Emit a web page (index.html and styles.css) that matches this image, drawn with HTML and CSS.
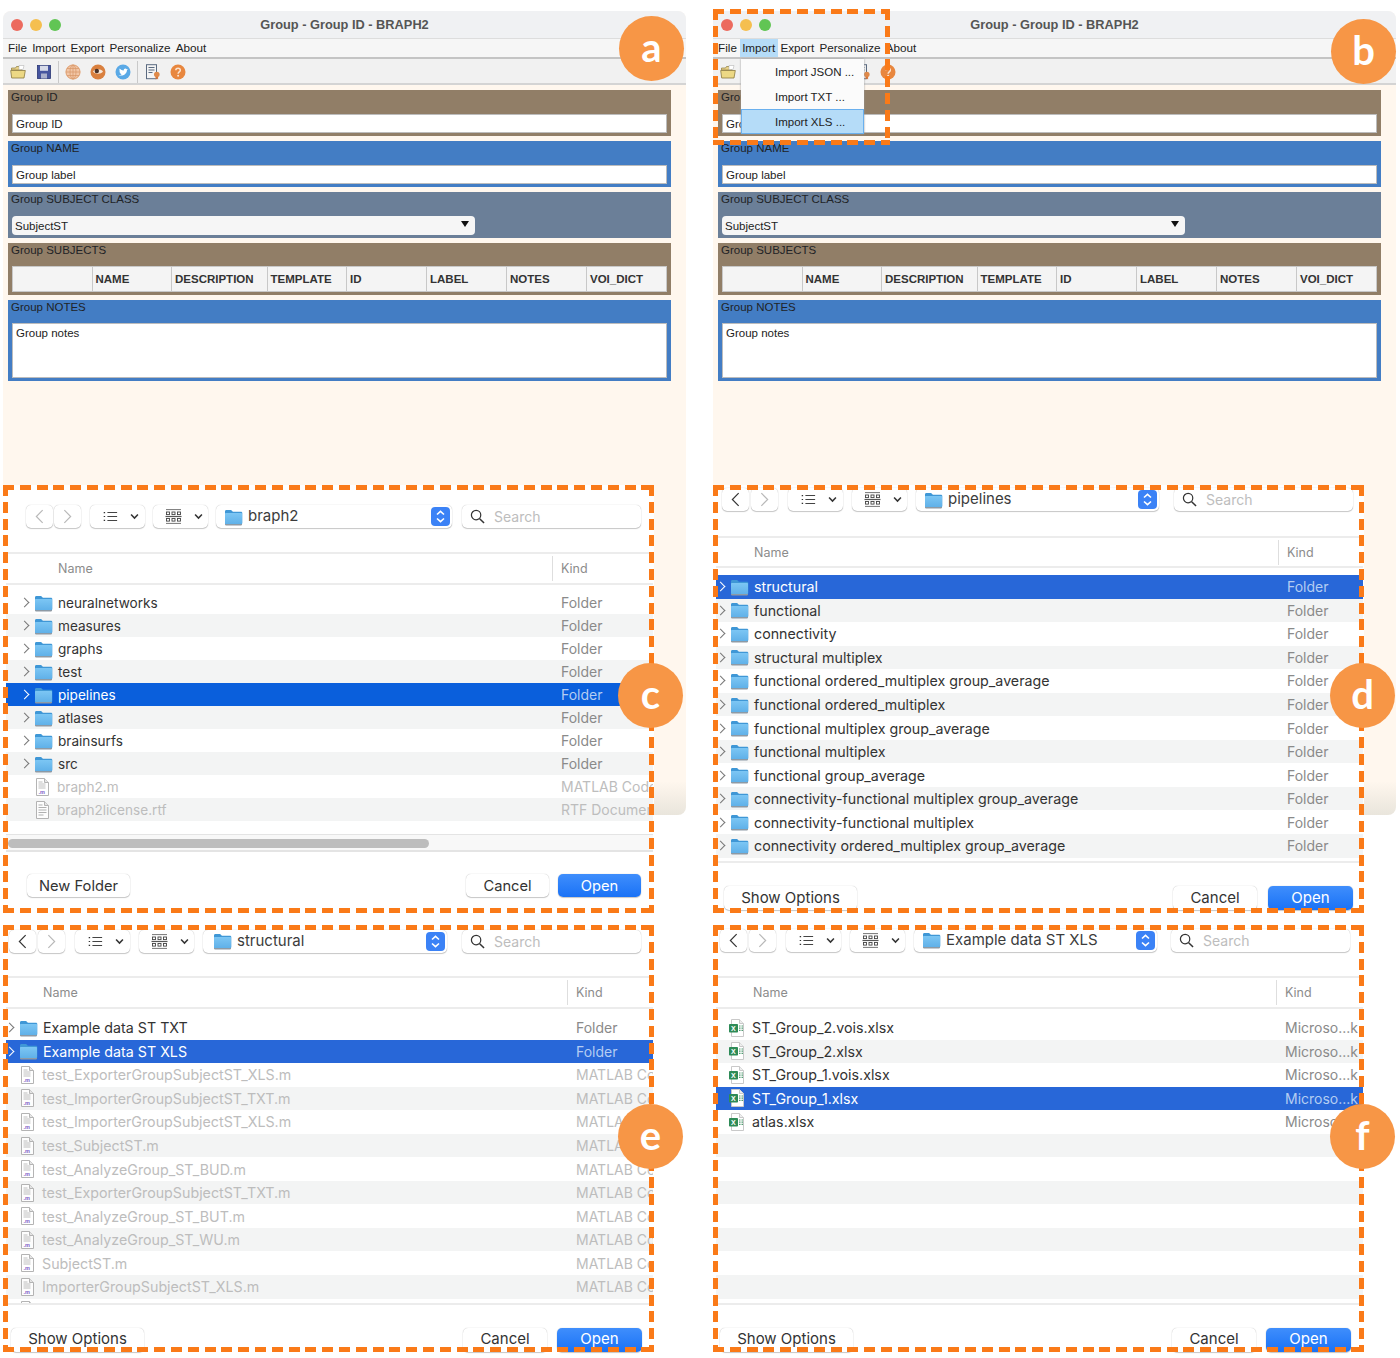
FILE: index.html

```html
<!DOCTYPE html>
<html lang="en">
<head>
  <meta charset="UTF-8">
  <title>Group - Group ID - BRAPH2</title>
  <link rel="stylesheet" href="styles.css">
</head>
<body>
<svg class="defs" width="0" height="0">
  <defs>
    <linearGradient id="fold" x1="0" y1="0" x2="0" y2="1"><stop offset="0" stop-color="#7cc6f4"/><stop offset="1" stop-color="#5fb0e8"/></linearGradient>
    <symbol id="folder" viewBox="0 0 19 18">
      <path d="M1 3.5C1 2.5 1.6 2 2.5 2h4.6l1.8 1.8h8c.9 0 1.4.6 1.4 1.4v9.6c0 1-.6 1.6-1.5 1.6h-14C1.6 16.4 1 15.8 1 14.8z" fill="#3f97d6"/>
      <path d="M1 6c0-.6.4-1 1-1h15c.6 0 1 .4 1 1v8.8c0 1-.6 1.6-1.5 1.6h-14C1.6 16.4 1 15.8 1 14.8z" fill="url(#fold)"/>
      <path d="M1 16h17v.6c0 .5-.4.9-1 .9H2c-.6 0-1-.4-1-.9z" fill="#8d9aa5"/>
    </symbol>
    <symbol id="mfile" viewBox="0 0 19 18">
      <path d="M3.5 .5h8l4 4v13h-12z" fill="#fff" stroke="#a8a8a8"/>
      <path d="M11.500 .5v4h4" fill="#e2e2e2" stroke="#a8a8a8"/>
      <path d="M5.500 4h4M5.500 6h7M5.500 8h7M5.500 10h7" stroke="#b5b5b5"/>
      <text x="5.500" y="16" class="m-ext">.m</text>
    </symbol>
    <symbol id="rtf" viewBox="0 0 19 18">
      <path d="M3.500 .5h8l4 4v13h-12z" fill="#fff" stroke="#a8a8a8"/>
      <path d="M11.500 .5v4h4" fill="#e2e2e2" stroke="#a8a8a8"/>
      <path d="M5.500 4h4M5.500 6.500h8M5.500 9h8M5.500 11.500h8M5.500 14h5" stroke="#a5a5a5"/>
    </symbol>
    <symbol id="xls" viewBox="0 0 19 18">
      <path d="M3.500 .5h8l4 4v13h-12z" fill="#fff" stroke="#c9c9c9"/>
      <path d="M11.500 .5v4h4" fill="#eee" stroke="#c9c9c9"/>
      <rect x="1" y="5" width="9" height="8.500" rx=".8" fill="#2e8b57"/>
      <text x="3" y="12" class="x-ext">X</text>
      <path d="M11 7h1.500M13.500 7H15M11 9.200h1.500M13.500 9.200H15M11 11.400h1.500M13.500 11.400H15" stroke="#4f9a70" stroke-width="1.200"/>
    </symbol>
    <symbol id="listview" viewBox="0 0 17 12">
      <path d="M5 1.500h11M5 6h11M5 10.500h11" stroke="#444" stroke-width="1.200"/>
      <path d="M.8 1.500h1.600M.8 6h1.600M.8 10.500h1.600" stroke="#333" stroke-width="1.400"/>
    </symbol>
    <symbol id="gridview" viewBox="0 0 17 15">
      <path d="M1 .6h15M1 14.400h15" stroke="#777"/>
      <path d="M.5 7.500h16" stroke="#555" stroke-width="1.200"/>
      <g fill="none" stroke="#444" stroke-width=".9"><rect x="1.500" y="3" width="3" height="2.600"/><rect x="7" y="3" width="3" height="2.600"/><rect x="12.500" y="3" width="3" height="2.600"/><rect x="1.500" y="9.500" width="3" height="2.600"/><rect x="7" y="9.500" width="3" height="2.600"/><rect x="12.500" y="9.500" width="3" height="2.600"/></g>
    </symbol>
    <symbol id="chevdown" viewBox="0 0 10 7"><path d="M1.200 1.300 5 5.200l3.800-3.900" fill="none" stroke="#333" stroke-width="1.700"/></symbol>
    <symbol id="back" viewBox="0 0 10 16"><path d="M8.500 1 1.500 8l7 7" fill="none" stroke="currentColor" stroke-width="1.300"/></symbol>
    <symbol id="fwd" viewBox="0 0 10 16"><path d="M1.500 1l7 7-7 7" fill="none" stroke="currentColor" stroke-width="1.300"/></symbol>
    <symbol id="stepper" viewBox="0 0 19 19">
      <rect width="19" height="19" rx="4" fill="#3b82f6"/>
      <path d="M6 7.500l3.500-3.200L13 7.500M6 11.500l3.500 3.200 3.500-3.200" fill="none" stroke="#fff" stroke-width="1.600"/>
    </symbol>
    <symbol id="lens" viewBox="0 0 16 16"><circle cx="6.500" cy="6.500" r="5" fill="none" stroke="#333" stroke-width="1.300"/><path d="M10.300 10.300l4.700 4.700" stroke="#333" stroke-width="1.600"/></symbol>
    <symbol id="t-open" viewBox="0 0 16 16">
      <path d="M1.500 4h4l1-1.500h5V6h-10z" fill="#e8d28a" stroke="#8b7a3e" stroke-width=".7"/>
      <path d="M9 1.500l5 0-1 4H9z" fill="#fff" stroke="#aaa" stroke-width=".5"/>
      <path d="M.7 6.500h14.600l-1.300 7.500H1.700z" fill="#ecd884" stroke="#8b7a3e" stroke-width=".8"/>
    </symbol>
    <symbol id="t-save" viewBox="0 0 16 16">
      <rect x="1.500" y="1.500" width="13" height="13" fill="#46559f" stroke="#2a3674" stroke-width=".8"/>
      <rect x="4" y="1.800" width="8" height="5" fill="#d7dbe9"/>
      <rect x="5" y="9.500" width="6" height="5" fill="#aab0cc"/>
    </symbol>
    <symbol id="t-globe" viewBox="0 0 16 16">
      <circle cx="8" cy="8" r="7.500" fill="#f2c6a6"/>
      <g fill="none" stroke="#d99a6c" stroke-width=".8"><circle cx="8" cy="8" r="7"/><ellipse cx="8" cy="8" rx="3" ry="7"/><path d="M1 8h14M2 4.500h12M2 11.500h12M8 1v14"/></g>
    </symbol>
    <symbol id="t-eye" viewBox="0 0 16 16">
      <circle cx="8" cy="8" r="7.500" fill="#d9803f"/>
      <path d="M3 7.500C5 4.500 11 4.500 13 7.500 11 10.500 5 10.500 3 7.500z" fill="#f6e6d8"/>
      <circle cx="6.800" cy="7" r="2.200" fill="#4a3228"/>
    </symbol>
    <symbol id="t-bird" viewBox="0 0 16 16">
      <circle cx="8" cy="8" r="7.500" fill="#5aa9e6"/>
      <path d="M3.500 11c3.500 1.500 8.200-.2 8.500-5l1-1-1.300.2c-.8-1.300-3.200-.8-3 1.300-1.700 0-3-.8-4-2-.6 1.200-.2 2.300.6 3l-.9-.2c0 1 .7 1.800 1.600 2l-.8.100c.3.700 1 1.100 1.700 1.100-.9.600-2 .7-3.400.5z" fill="#fff"/>
    </symbol>
    <symbol id="t-cert" viewBox="0 0 16 16">
      <rect x="1.500" y=".7" width="10" height="14" fill="#f4f4f4" stroke="#5a6a80"/>
      <path d="M3.500 3.500h6M3.500 6h6M3.500 8.500h4" stroke="#5a6a80"/>
      <circle cx="11.800" cy="10.500" r="2.800" fill="#e08a4a"/>
      <path d="M10.500 12.800v2.700l1.300-1 1.300 1v-2.700" fill="#d9773a"/>
    </symbol>
    <symbol id="t-help" viewBox="0 0 16 16">
      <circle cx="8" cy="8" r="7.500" fill="#e8873f"/>
      <path d="M5.800 6.200C5.800 3.600 10.300 3.600 10.300 6.200c0 1.700-2.200 1.700-2.200 3.500" fill="none" stroke="#fbe3cf" stroke-width="1.500"/>
      <circle cx="8.100" cy="11.800" r="1" fill="#fbe3cf"/>
    </symbol>
  </defs>
</svg>

<!-- (a) main window -->
<section class="window win-a">
  <header class="titlebar"><span class="lights"><i class="red"></i><i class="yellow"></i><i class="green"></i></span>Group - Group ID - BRAPH2</header>
  <nav class="menubar"><span>File</span><span>Import</span><span>Export</span><span>Personalize</span><span>About</span></nav>
  <div class="toolbar">
    <svg><use href="#t-open"/></svg><svg><use href="#t-save"/></svg><b></b>
    <svg><use href="#t-globe"/></svg><svg><use href="#t-eye"/></svg><svg><use href="#t-bird"/></svg><b></b>
    <svg><use href="#t-cert"/></svg><svg><use href="#t-help"/></svg>
  </div>
  <main class="panels">
    <div class="panel brown"><label>Group ID</label><div class="field">Group ID</div></div>
    <div class="panel blue"><label>Group NAME</label><div class="field">Group label</div></div>
    <div class="panel slate"><label>Group SUBJECT CLASS</label><div class="select">SubjectST<i></i></div></div>
    <div class="panel brown"><label>Group SUBJECTS</label>
      <div class="table"><span></span><span>NAME</span><span>DESCRIPTION</span><span>TEMPLATE</span><span>ID</span><span>LABEL</span><span>NOTES</span><span>VOI_DICT</span></div>
    </div>
    <div class="panel blue"><label>Group NOTES</label><div class="field notes">Group notes</div></div>
  </main>
</section>

<!-- (b) same window with the Import menu open -->
<section class="window win-b">
  <header class="titlebar"><span class="lights"><i class="red"></i><i class="yellow"></i><i class="green"></i></span>Group - Group ID - BRAPH2</header>
  <nav class="menubar"><span>File</span><span class="open">Import</span><span>Export</span><span>Personalize</span><span>About</span></nav>
  <div class="toolbar">
    <svg><use href="#t-open"/></svg><svg><use href="#t-save"/></svg><b></b>
    <svg><use href="#t-globe"/></svg><svg><use href="#t-eye"/></svg><svg><use href="#t-bird"/></svg><b></b>
    <svg><use href="#t-cert"/></svg><svg><use href="#t-help"/></svg>
  </div>
  <main class="panels">
    <div class="panel brown"><label>Group ID</label><div class="field">Group ID</div></div>
    <div class="panel blue"><label>Group NAME</label><div class="field">Group label</div></div>
    <div class="panel slate"><label>Group SUBJECT CLASS</label><div class="select">SubjectST<i></i></div></div>
    <div class="panel brown"><label>Group SUBJECTS</label>
      <div class="table"><span></span><span>NAME</span><span>DESCRIPTION</span><span>TEMPLATE</span><span>ID</span><span>LABEL</span><span>NOTES</span><span>VOI_DICT</span></div>
    </div>
    <div class="panel blue"><label>Group NOTES</label><div class="field notes">Group notes</div></div>
  </main>
  <ul class="dropdown">
    <li>Import JSON ...</li>
    <li>Import TXT ...</li>
    <li class="hover">Import XLS ...</li>
  </ul>
</section>
<div class="dash dash-menu"></div>

<!-- (c) -->
<section class="dialog dlg-c">
  <div class="dlg-bar">
    <span class="btn nav off"><svg><use href="#back"/></svg></span><span class="btn nav off"><svg><use href="#fwd"/></svg></span>
    <span class="btn view"><svg class="v-list"><use href="#listview"/></svg><svg class="v-down"><use href="#chevdown"/></svg></span>
    <span class="btn view"><svg class="v-grid"><use href="#gridview"/></svg><svg class="v-down"><use href="#chevdown"/></svg></span>
    <span class="btn path"><svg class="ico"><use href="#folder"/></svg>braph2<svg class="step"><use href="#stepper"/></svg></span>
    <span class="btn search"><svg><use href="#lens"/></svg>Search</span>
  </div>
  <div class="hdr"><span class="name">Name</span><span class="kind">Kind</span></div>
  <div class="list">
    <div class="row dir"><svg class="ico"><use href="#folder"/></svg><span class="name">neuralnetworks</span><span class="kind">Folder</span></div>
    <div class="row dir"><svg class="ico"><use href="#folder"/></svg><span class="name">measures</span><span class="kind">Folder</span></div>
    <div class="row dir"><svg class="ico"><use href="#folder"/></svg><span class="name">graphs</span><span class="kind">Folder</span></div>
    <div class="row dir"><svg class="ico"><use href="#folder"/></svg><span class="name">test</span><span class="kind">Folder</span></div>
    <div class="row dir sel"><svg class="ico"><use href="#folder"/></svg><span class="name">pipelines</span><span class="kind">Folder</span></div>
    <div class="row dir"><svg class="ico"><use href="#folder"/></svg><span class="name">atlases</span><span class="kind">Folder</span></div>
    <div class="row dir"><svg class="ico"><use href="#folder"/></svg><span class="name">brainsurfs</span><span class="kind">Folder</span></div>
    <div class="row dir"><svg class="ico"><use href="#folder"/></svg><span class="name">src</span><span class="kind">Folder</span></div>
    <div class="row off"><svg class="ico"><use href="#mfile"/></svg><span class="name">braph2.m</span><span class="kind">MATLAB Code</span></div>
    <div class="row off"><svg class="ico"><use href="#rtf"/></svg><span class="name">braph2license.rtf</span><span class="kind">RTF Document</span></div>
  </div>
  <div class="hscroll"><i></i></div>
  <div class="dlg-foot">
    <span class="btn push">New Folder</span><span class="spacer"></span>
    <span class="btn push">Cancel</span><span class="btn push primary">Open</span>
  </div>
  <div class="dash"></div>
</section>

<!-- (d) -->
<section class="dialog dlg-d">
  <div class="dlg-bar">
    <span class="btn nav"><svg><use href="#back"/></svg></span><span class="btn nav off"><svg><use href="#fwd"/></svg></span>
    <span class="btn view"><svg class="v-list"><use href="#listview"/></svg><svg class="v-down"><use href="#chevdown"/></svg></span>
    <span class="btn view"><svg class="v-grid"><use href="#gridview"/></svg><svg class="v-down"><use href="#chevdown"/></svg></span>
    <span class="btn path"><svg class="ico"><use href="#folder"/></svg>pipelines<svg class="step"><use href="#stepper"/></svg></span>
    <span class="btn search"><svg><use href="#lens"/></svg>Search</span>
  </div>
  <div class="hdr"><span class="name">Name</span><span class="kind">Kind</span></div>
  <div class="list">
    <div class="row dir sel"><svg class="ico"><use href="#folder"/></svg><span class="name">structural</span><span class="kind">Folder</span></div>
    <div class="row dir"><svg class="ico"><use href="#folder"/></svg><span class="name">functional</span><span class="kind">Folder</span></div>
    <div class="row dir"><svg class="ico"><use href="#folder"/></svg><span class="name">connectivity</span><span class="kind">Folder</span></div>
    <div class="row dir"><svg class="ico"><use href="#folder"/></svg><span class="name">structural multiplex</span><span class="kind">Folder</span></div>
    <div class="row dir"><svg class="ico"><use href="#folder"/></svg><span class="name">functional ordered_multiplex group_average</span><span class="kind">Folder</span></div>
    <div class="row dir"><svg class="ico"><use href="#folder"/></svg><span class="name">functional ordered_multiplex</span><span class="kind">Folder</span></div>
    <div class="row dir"><svg class="ico"><use href="#folder"/></svg><span class="name">functional multiplex group_average</span><span class="kind">Folder</span></div>
    <div class="row dir"><svg class="ico"><use href="#folder"/></svg><span class="name">functional multiplex</span><span class="kind">Folder</span></div>
    <div class="row dir"><svg class="ico"><use href="#folder"/></svg><span class="name">functional group_average</span><span class="kind">Folder</span></div>
    <div class="row dir"><svg class="ico"><use href="#folder"/></svg><span class="name">connectivity-functional multiplex group_average</span><span class="kind">Folder</span></div>
    <div class="row dir"><svg class="ico"><use href="#folder"/></svg><span class="name">connectivity-functional multiplex</span><span class="kind">Folder</span></div>
    <div class="row dir"><svg class="ico"><use href="#folder"/></svg><span class="name">connectivity ordered_multiplex group_average</span><span class="kind">Folder</span></div>
  </div>
  <div class="dlg-foot">
    <span class="btn push wide">Show Options</span><span class="spacer"></span>
    <span class="btn push">Cancel</span><span class="btn push primary">Open</span>
  </div>
  <div class="dash"></div>
</section>

<!-- (e) -->
<section class="dialog dlg-e">
  <div class="dlg-bar">
    <span class="btn nav"><svg><use href="#back"/></svg></span><span class="btn nav off"><svg><use href="#fwd"/></svg></span>
    <span class="btn view"><svg class="v-list"><use href="#listview"/></svg><svg class="v-down"><use href="#chevdown"/></svg></span>
    <span class="btn view"><svg class="v-grid"><use href="#gridview"/></svg><svg class="v-down"><use href="#chevdown"/></svg></span>
    <span class="btn path"><svg class="ico"><use href="#folder"/></svg>structural<svg class="step"><use href="#stepper"/></svg></span>
    <span class="btn search"><svg><use href="#lens"/></svg>Search</span>
  </div>
  <div class="hdr"><span class="name">Name</span><span class="kind">Kind</span></div>
  <div class="list">
    <div class="row dir"><svg class="ico"><use href="#folder"/></svg><span class="name">Example data ST TXT</span><span class="kind">Folder</span></div>
    <div class="row dir sel"><svg class="ico"><use href="#folder"/></svg><span class="name">Example data ST XLS</span><span class="kind">Folder</span></div>
    <div class="row off"><svg class="ico"><use href="#mfile"/></svg><span class="name">test_ExporterGroupSubjectST_XLS.m</span><span class="kind">MATLAB Code</span></div>
    <div class="row off"><svg class="ico"><use href="#mfile"/></svg><span class="name">test_ImporterGroupSubjectST_TXT.m</span><span class="kind">MATLAB Code</span></div>
    <div class="row off"><svg class="ico"><use href="#mfile"/></svg><span class="name">test_ImporterGroupSubjectST_XLS.m</span><span class="kind">MATLAB Code</span></div>
    <div class="row off"><svg class="ico"><use href="#mfile"/></svg><span class="name">test_SubjectST.m</span><span class="kind">MATLAB Code</span></div>
    <div class="row off"><svg class="ico"><use href="#mfile"/></svg><span class="name">test_AnalyzeGroup_ST_BUD.m</span><span class="kind">MATLAB Code</span></div>
    <div class="row off"><svg class="ico"><use href="#mfile"/></svg><span class="name">test_ExporterGroupSubjectST_TXT.m</span><span class="kind">MATLAB Code</span></div>
    <div class="row off"><svg class="ico"><use href="#mfile"/></svg><span class="name">test_AnalyzeGroup_ST_BUT.m</span><span class="kind">MATLAB Code</span></div>
    <div class="row off"><svg class="ico"><use href="#mfile"/></svg><span class="name">test_AnalyzeGroup_ST_WU.m</span><span class="kind">MATLAB Code</span></div>
    <div class="row off"><svg class="ico"><use href="#mfile"/></svg><span class="name">SubjectST.m</span><span class="kind">MATLAB Code</span></div>
    <div class="row off"><svg class="ico"><use href="#mfile"/></svg><span class="name">ImporterGroupSubjectST_XLS.m</span><span class="kind">MATLAB Code</span></div>
    <div class="row off"><svg class="ico"><use href="#mfile"/></svg></div>
  </div>
  <div class="dlg-foot">
    <span class="btn push wide">Show Options</span><span class="spacer"></span>
    <span class="btn push">Cancel</span><span class="btn push primary">Open</span>
  </div>
  <div class="dash"></div>
</section>

<!-- (f) -->
<section class="dialog dlg-f">
  <div class="dlg-bar">
    <span class="btn nav"><svg><use href="#back"/></svg></span><span class="btn nav off"><svg><use href="#fwd"/></svg></span>
    <span class="btn view"><svg class="v-list"><use href="#listview"/></svg><svg class="v-down"><use href="#chevdown"/></svg></span>
    <span class="btn view"><svg class="v-grid"><use href="#gridview"/></svg><svg class="v-down"><use href="#chevdown"/></svg></span>
    <span class="btn path"><svg class="ico"><use href="#folder"/></svg>Example data ST XLS<svg class="step"><use href="#stepper"/></svg></span>
    <span class="btn search"><svg><use href="#lens"/></svg>Search</span>
  </div>
  <div class="hdr"><span class="name">Name</span><span class="kind">Kind</span></div>
  <div class="list">
    <div class="row"><svg class="ico"><use href="#xls"/></svg><span class="name">ST_Group_2.vois.xlsx</span><span class="kind">Microso...k</span></div>
    <div class="row"><svg class="ico"><use href="#xls"/></svg><span class="name">ST_Group_2.xlsx</span><span class="kind">Microso...k</span></div>
    <div class="row"><svg class="ico"><use href="#xls"/></svg><span class="name">ST_Group_1.vois.xlsx</span><span class="kind">Microso...k</span></div>
    <div class="row sel"><svg class="ico"><use href="#xls"/></svg><span class="name">ST_Group_1.xlsx</span><span class="kind">Microso...k</span></div>
    <div class="row"><svg class="ico"><use href="#xls"/></svg><span class="name">atlas.xlsx</span><span class="kind">Microso...k</span></div>
    <div class="row"></div><div class="row"></div><div class="row"></div><div class="row"></div>
    <div class="row"></div><div class="row"></div><div class="row"></div>
  </div>
  <div class="dlg-foot">
    <span class="btn push wide">Show Options</span><span class="spacer"></span>
    <span class="btn push">Cancel</span><span class="btn push primary">Open</span>
  </div>
  <div class="dash"></div>
</section>

<span class="badge bd-a">a</span>
<span class="badge bd-b">b</span>
<span class="badge bd-c">c</span>
<span class="badge bd-d">d</span>
<span class="badge bd-e">e</span>
<span class="badge bd-f">f</span>
</body>
</html>
```

FILE: styles.css

```css
* { box-sizing: border-box; }

html, body { margin: 0; padding: 0; }

body {
  position: relative;
  width: 1400px;
  height: 1358px;
  overflow: hidden;
  background: #fff;
  font-family: "Liberation Sans", Arial, sans-serif;
}

.defs { position: absolute; }
.m-ext { font: bold 5.5px "Liberation Sans", sans-serif; fill: #6a3fc0; }
.x-ext { font: bold 7px "Liberation Sans", sans-serif; fill: #fff; }

/* windows sit on a free canvas, like the figure they come from */
.window {
  position: absolute;
  top: 11px;
  width: 683px;
  height: 804px;
  border-radius: 8px;
  overflow: hidden;
  background: linear-gradient(#fff7ee 0, #fff7ee 770px, #e9e5dc 804px);
}
.win-a { left: 3px; }
.win-b { left: 713px; }

.titlebar {
  position: relative;
  height: 27px;
  background: #f0f1f3;
  color: #555;
  font-size: 12.8px;
  font-weight: bold;
  line-height: 27px;
  text-align: center;
}
.lights {
  position: absolute;
  left: 8px;
  top: 8px;
  display: flex;
  gap: 7px;
}
.lights i { width: 12px; height: 12px; border-radius: 50%; }
.red { background: #ec6a5e; }
.yellow { background: #f5bf4f; }
.green { background: #61c554; }

.menubar {
  display: flex;
  height: 21px;
  padding-left: 2.5px;
  background: #f6f6f6;
  border-top: 1px solid #ddd;
  border-bottom: 2px solid #c4c4c4;
  color: #222;
  font-size: 11.7px;
  line-height: 18px;
}
.menubar span { padding: 0 2.6px; }
.menubar .open { background: #b5dcf8; }

.toolbar {
  display: flex;
  align-items: center;
  height: 26px;
  padding: 1px 0 0 7px;
  gap: 9px;
  background: #f1f1f1;
  border-bottom: 2px solid #d4d4d4;
}
.toolbar svg { width: 16px; height: 16px; }
.toolbar svg:first-child { margin-right: 1px; }
.toolbar b { width: 1px; height: 22px; margin: 0 -3px; background: #c9c9c9; }
.toolbar b:nth-of-type(2) { margin-right: -2px; }

.panels {
  display: flex;
  flex-direction: column;
  gap: 5px;
  width: 663px;
  margin: 5px 0 0 5px;
}
.panel {
  padding: 0 4px 3px;
  color: #1f2326;
  font-size: 11.5px;
}
.panel label { display: block; height: 24px; margin-left: -1px; line-height: 14px; }
.brown { background: #917e67; }
.blue { background: #437dc4; }
.slate { background: #6b7f98; }

.field {
  height: 19px;
  padding-left: 3px;
  background: #fff;
  border: 1px solid #bcbcbc;
  color: #222;
  line-height: 18px;
}
.notes { height: 55px; margin-top: -1px; padding-top: 1px; line-height: 16px; }

.select {
  position: relative;
  width: 463px;
  height: 19px;
  padding-left: 3px;
  background: #f6f6f6;
  border-radius: 4px;
  color: #222;
  line-height: 20px;
}
.select i {
  position: absolute;
  right: 6px;
  top: 5px;
  border-style: solid;
  border-width: 6px 4px 0;
  border-color: #111 transparent transparent;
}

.table {
  display: grid;
  grid-template-columns: 79.5px 79.5px 95.5px 79.5px 80px 80px 80px 80px;
  width: 655px;
  height: 26px;
  margin-top: -1px;
  background: #f4f4f4;
  border: 1px solid #c8c8c8;
  color: #333;
  font-weight: bold;
  line-height: 25px;
}
.table span { padding-left: 3px; border-right: 1px solid #c8c8c8; }
.table span:last-child { border-right: 0; }

.dropdown {
  position: absolute;
  left: 28px;
  top: 48px;
  width: 123px;
  margin: 0;
  padding: 0;
  list-style: none;
  background: #fbfbfb;
  box-shadow: 0 0 2px #999;
  color: #222;
  font-size: 11.5px;
}
.dropdown li { height: 25px; padding-left: 34px; line-height: 27px; }
.dropdown .hover { background: #b5dcf8; box-shadow: inset 0 0 0 1px #6ab0ee; }

/* file dialogs */
.dialog {
  position: absolute;
  display: flex;
  flex-direction: column;
  width: 651px;
  background: #fff;
  color: #333;
  font-family: Inter, Roboto, sans-serif;
  font-size: 14.25px;
  --row: 23.55px;
}
.dlg-c { left: 3px; top: 485px; height: 428px; font-size: 13.6px; --row: 23px; --ind: 15px; --kind: 92px; --sel: #0a5fdc; }
.dlg-d { left: 713px; top: 485px; height: 428px; --ind: 1px; --kind: 76px; --sel: #2867d8; }
.dlg-e { left: 3px; top: 925px; height: 427px; --ind: 0px; --kind: 77px; --sel: #2867d8; }
.dlg-f { left: 713px; top: 925px; height: 427px; --ind: 0px; --kind: 78px; --sel: #2867d8; }

.dlg-bar { display: flex; align-items: flex-start; flex: none; }
.dlg-c .dlg-bar { height: 67px; padding: 20px 13px 0 23px; gap: 8px; --gap: 11px; }
.dlg-d .dlg-bar { height: 51px; padding: 3px 11px 0 9px; gap: 9px; --gap: 15px; }
.dlg-e .dlg-bar { height: 51px; padding: 5px 13px 0 6px; gap: 9px; --gap: 15px; }
.dlg-f .dlg-bar { height: 51px; padding: 4px 14px 0 7px; gap: 9px; --gap: 14px; }

.btn {
  display: flex;
  align-items: center;
  justify-content: center;
  height: 23px;
  background: #fff;
  border-radius: 5px;
  box-shadow: 0 0 1px rgba(0, 0, 0, .3), 0 1px 1px rgba(0, 0, 0, .2);
}
.nav { width: 27px; color: #333; }
.nav svg { width: 9px; height: 15px; }
.nav.off { color: #b8b8b8; }
.nav + .nav { margin: 0 1px 0 -7px; }
.view { width: 55px; padding-left: 6px; gap: 12px; }
.v-list { width: 15px; height: 11px; }
.v-grid { width: 17px; height: 15px; }
.v-down { width: 9px; height: 7px; }
.path {
  flex: 1;
  justify-content: flex-start;
  padding: 0 2px 2px 8px;
  margin-right: calc(var(--gap) - 9px);
  color: #3c3c3c;
  font-size: 15px;
}
.dlg-e .path { padding: 0 2px 3px 10px; }
.dlg-f .path { padding-bottom: 3px; }
.path .ico { width: 19px; height: 18px; margin: 2px 5px 0 0; }
.step { width: 19px; height: 19px; margin: 0 0 -2px auto; }
.search {
  flex: none;
  justify-content: flex-start;
  width: 179px;
  padding-left: 8px;
  color: #bdbdbd;
  font-size: 14px;
}
.dlg-d .search, .dlg-e .search, .dlg-f .search { padding-bottom: 1px; }
.search svg { width: 15px; height: 15px; margin-right: 9px; }

.hdr {
  display: flex;
  flex: none;
  align-items: center;
  height: 33px;
  margin: 0 1px 0 3px;
  padding-left: var(--ind);
  border-top: 2px solid #ececec;
  border-bottom: 2px solid #ececec;
  color: #8c8c8c;
  font-size: 12.5px;
}
.dlg-d .hdr { height: 32px; }
.hdr .name { margin-left: 37px; flex: 1; }
.hdr .kind { position: relative; width: var(--kind); color: #8c8c8c; }
.hdr .kind::before {
  content: "";
  position: absolute;
  left: -9px;
  top: -5px;
  bottom: -5px;
  width: 1px;
  background: #dedede;
}

.list { flex: none; margin: 0 1px 0 3px; padding-top: 6px; overflow: hidden; }
.dlg-c .list { height: 236px; }
.dlg-d .list { height: 293px; padding-top: 7px; }
.dlg-e .list { height: 294px; padding-top: 7px; }
.dlg-f .list { height: 294px; padding-top: 7px; }

.row {
  display: flex;
  align-items: center;
  height: var(--row);
  padding-left: var(--ind);
}
.row:nth-child(even) { background: #f3f4f4; }
.row::before {
  content: "";
  flex: none;
  width: 8px;
  margin-right: 4px;
}
.row.dir::before {
  width: 6px;
  height: 6px;
  margin: 0 6px 0 0;
  border-top: 1.5px solid #777;
  border-right: 1.5px solid #777;
  transform: rotate(45deg);
}
.ico { flex: none; width: 19px; height: 18px; margin-right: 5px; }
.row .name { flex: 1; white-space: nowrap; }
.row .kind { flex: none; width: var(--kind); overflow: hidden; color: #8a8a8a; font-size: 14px; white-space: nowrap; }
.row.off .name, .row.off .kind { color: #bdbdbd; }
.row.off .ico { opacity: .85; }
.row.sel { background: var(--sel); color: #fff; }
.row.sel .kind { color: #b4cdf2; }
.row.sel.dir::before { border-color: #fff; }

.hscroll {
  flex: none;
  height: 18px;
  margin: 13px 1px 0 3px;
  padding: 4px 0 0 2px;
  background: #f8f8f8;
  border-top: 1px solid #e4e4e4;
  border-bottom: 2px solid #e4e4e4;
}
.hscroll i { display: block; width: 421px; height: 9px; border-radius: 5px; background: #bdbdbd; }

.dlg-foot { display: flex; flex: none; gap: 10px; border-top: 2px solid #ececec; }
.dlg-c .dlg-foot { gap: 9px; padding: 22px 13px 0 24px; border-top: 0; }
.dlg-d .dlg-foot { gap: 11px; padding: 23px 11px 0 11px; }
.dlg-e .dlg-foot { padding: 23px 12px 0 8px; }
.dlg-f .dlg-foot { padding: 23px 13px 0 7px; }

.spacer { flex: 1; }
.push { width: 84px; height: 24px; color: #333; font-size: 15px; }
.dlg-c .push { width: 83px; height: 23px; font-size: 14.7px; }
.dlg-c .push:first-child { width: 103px; }
.dlg-d .push { padding-bottom: 1px; }
.dlg-e .push, .dlg-f .push { padding-bottom: 3px; }
.wide { width: 133px; }
.primary {
  width: 85px;
  background: linear-gradient(#3f8efc, #1a72f6);
  color: #fff;
}

/* orange dashed outline, drawn over whatever it frames */
.dash {
  position: absolute;
  inset: 0;
  pointer-events: none;
  background:
    repeating-linear-gradient(90deg, #fa7a18 0 11px, transparent 11px 16.8px) left top / 100% 5px no-repeat,
    repeating-linear-gradient(90deg, #fa7a18 0 11px, transparent 11px 16.8px) left bottom / 100% 5px no-repeat,
    repeating-linear-gradient(180deg, #fa7a18 0 11px, transparent 11px 16.8px) left top / 5px 100% no-repeat,
    repeating-linear-gradient(180deg, #fa7a18 0 11px, transparent 11px 16.8px) right top / 5px 100% no-repeat;
}
.dash-menu { left: 713px; top: 9px; right: auto; bottom: auto; width: 177px; height: 136px; }

/* panel letters */
.badge {
  position: absolute;
  width: 65px;
  height: 65px;
  border-radius: 50%;
  background: #f79646;
  color: #fff;
  font-family: Lato, "Open Sans", sans-serif;
  font-size: 40px;
  font-weight: 700;
  line-height: 62px;
  text-align: center;
}
.bd-a { left: 619px; top: 16px; }
.bd-b { left: 1331px; top: 19px; }
.bd-c { left: 618px; top: 663px; }
.bd-d { left: 1330px; top: 663px; }
.bd-e { left: 618px; top: 1104px; }
.bd-f { left: 1330px; top: 1104px; }
```
